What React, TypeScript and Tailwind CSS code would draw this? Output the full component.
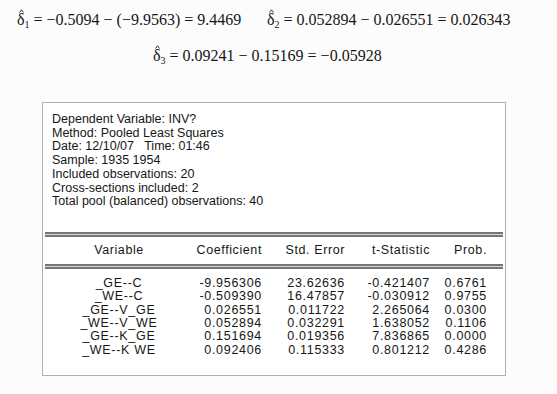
import React from "react";

const info = [
  "Dependent Variable: INV?",
  "Method: Pooled Least Squares",
  "Date: 12/10/07   Time: 01:46",
  "Sample: 1935 1954",
  "Included observations: 20",
  "Cross-sections included: 2",
  "Total pool (balanced) observations: 40",
];

const rows = [
  ["_GE--C", "-9.956306", "23.62636", "-0.421407", "0.6761"],
  ["_WE--C", "-0.509390", "16.47857", "-0.030912", "0.9755"],
  ["_GE--V_GE", "0.026551", "0.011722", "2.265064", "0.0300"],
  ["_WE--V_WE", "0.052894", "0.032291", "1.638052", "0.1106"],
  ["_GE--K_GE", "0.151694", "0.019356", "7.836865", "0.0000"],
  ["_WE--K WE", "0.092406", "0.115333", "0.801212", "0.4286"],
];

// delta with a hat drawn as a small caret
function Delta({ n }: { n: string }) {
  return (
    <span className="whitespace-nowrap">
      <span className="relative inline-block">
        δ
        <svg
          className="absolute left-[2px] -top-[1px]"
          width="5"
          height="4"
          viewBox="0 0 5 4"
        >
          <path d="M0.5 3.5 L2.5 0.8 L4.5 3.5" fill="none" stroke="#161616" strokeWidth="0.9" />
        </svg>
      </span>
      <sub className="text-[10px]">{n}</sub>
    </span>
  );
}

function DoubleLine() {
  return (
    <div className="mx-[2px]">
      <div className="h-[2px] bg-[#767676]"></div>
      <div className="h-[1px] bg-[#d8d8d8]"></div>
      <div className="h-[2px] bg-[#767676]"></div>
    </div>
  );
}

const cols = "grid grid-cols-[148px_69px_83px_85px_57px]";

export default function App() {
  return (
    <div className="w-[557px] h-[394px] overflow-hidden bg-[#fcfcfc] text-[#161616]">
      <div className="font-['Liberation_Serif',serif] text-[16px] leading-[20px]">
        <div className="flex pt-[10px] whitespace-pre">
          <div className="pl-[17px] w-[267px]">
            <Delta n="1" /> = −0.5094 − (−9.9563) = 9.4469
          </div>
          <div>
            <Delta n="2" /> = 0.052894 − 0.026551 = 0.026343
          </div>
        </div>
        <div className="pl-[153px] mt-[16px] whitespace-pre">
          <Delta n="3" /> = 0.09241 − 0.15169 = −0.05928
        </div>
      </div>

      <div className="ml-[42px] mt-[36px] w-[464px] h-[274px] border border-[#b0b0b0] bg-white font-['Liberation_Sans',Arial,sans-serif] text-[12.5px]">
        <div className="pl-[9px] pt-[10px] leading-[13.7px] whitespace-pre">
          {info.map((line) => (
            <div key={line}>{line}</div>
          ))}
        </div>

        <div className="mt-[23px]">
          <DoubleLine />
        </div>
        <div className={`mx-[2px] ${cols} h-[27px] items-center tracking-[0.6px]`}>
          <div className="text-center">Variable</div>
          <div className="text-right">Coefficient</div>
          <div className="text-right">Std. Error</div>
          <div className="text-right">t-Statistic</div>
          <div className="text-right">Prob.</div>
        </div>
        <DoubleLine />

        <div className="mx-[2px] pt-[8px] tracking-[0.7px]">
          {rows.map((r) => (
            <div
              key={r[0]}
              className={`${cols} h-[13.33px] items-center leading-[13px]`}
            >
              <div className="text-center">{r[0]}</div>
              <div className="text-right">{r[1]}</div>
              <div className="text-right">{r[2]}</div>
              <div className="text-right">{r[3]}</div>
              <div className="text-right">{r[4]}</div>
            </div>
          ))}
        </div>
      </div>
    </div>
  );
}
